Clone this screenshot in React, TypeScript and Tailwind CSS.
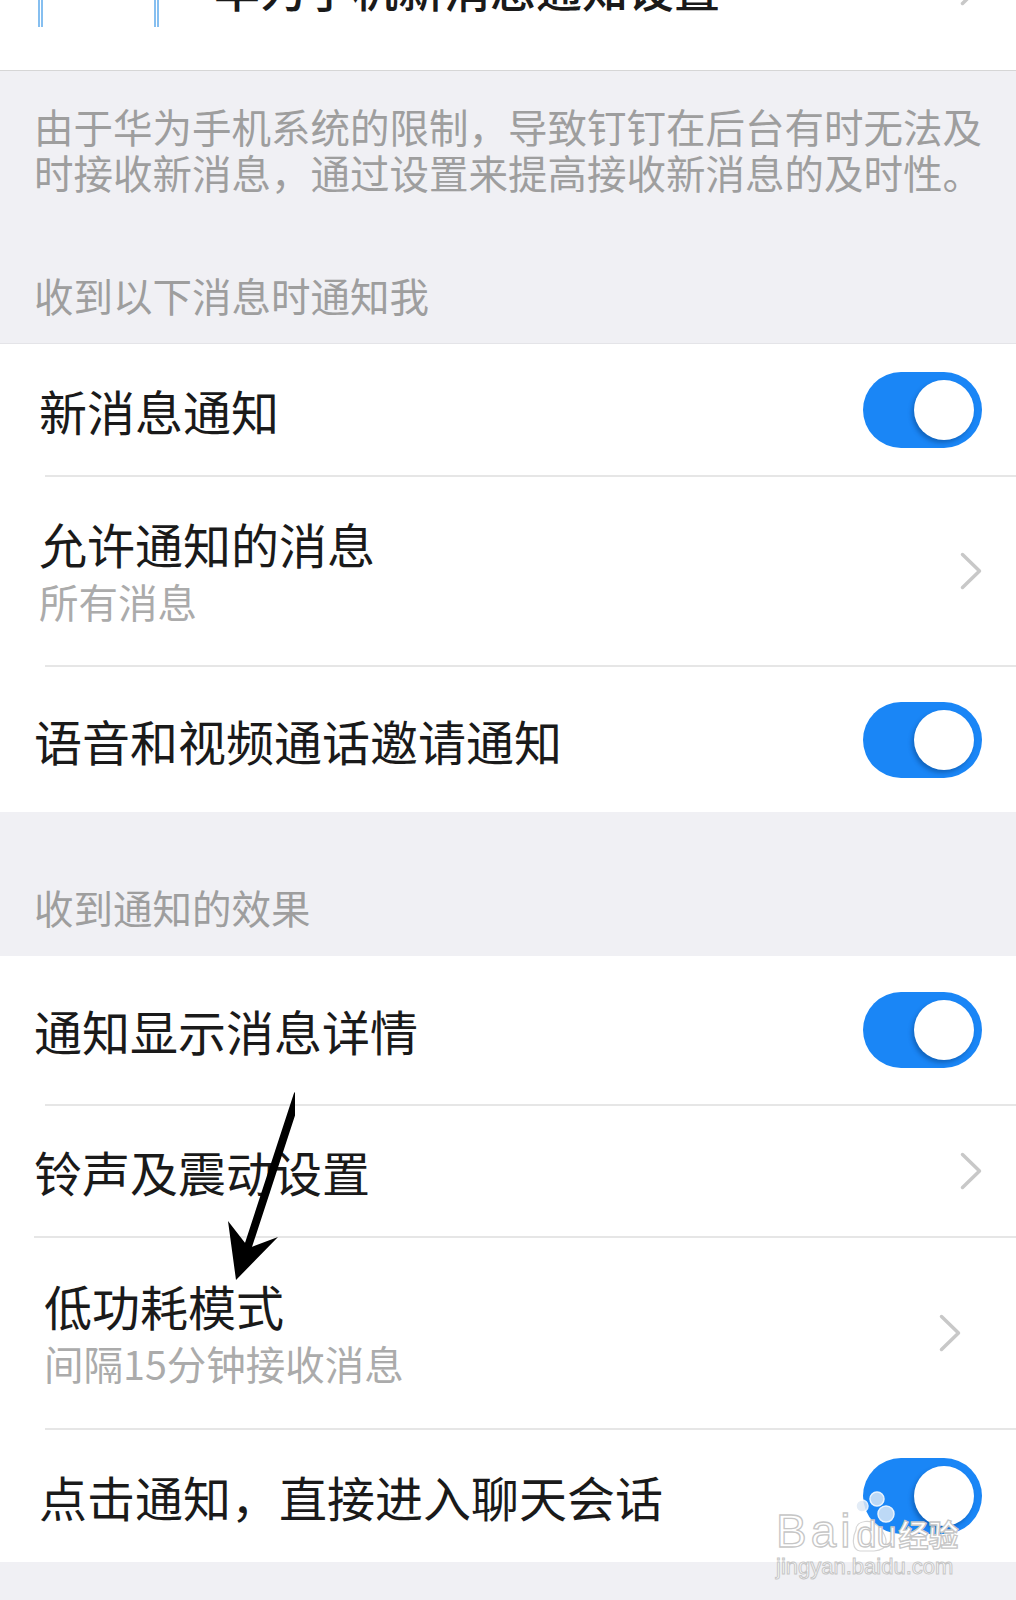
import React from "react";

function Toggle() {
  return (
    <div className="flex h-[76px] w-[119px] shrink-0 items-center justify-end rounded-full bg-[#1a86f6] pr-[8px]">
      <div className="h-[60px] w-[60px] rounded-full bg-white shadow-[-2px_3px_4px_rgba(0,40,90,0.35)]" />
    </div>
  );
}

function Chevron() {
  return (
    <svg width="22" height="38" viewBox="0 0 22 38" className="shrink-0">
      <polyline points="2.5,2.5 19.5,19 2.5,35.5" fill="none" stroke="#c8c8c8" strokeWidth="3.5" strokeLinecap="round" strokeLinejoin="round" />
    </svg>
  );
}

function Divider({ left }: { left: string }) {
  return (
    <div className={`bg-white ${left}`}>
      <div className="h-[2px] bg-[#e6e6e6]" />
    </div>
  );
}

function Title({ children }: { children: React.ReactNode }) {
  return <div className="text-[48px] leading-[48px] text-[#1a1a1a]">{children}</div>;
}

function Sub({ children }: { children: React.ReactNode }) {
  return <div className="mt-[12px] text-[39.5px] leading-[44px] text-[#ababab]">{children}</div>;
}

export default function App() {
  return (
    <div className="relative h-[1600px] w-[1016px] overflow-hidden bg-[#f0f0f4] font-['Noto_Sans_CJK_SC','Noto_Sans',sans-serif]">
      {/* top row, scrolled mostly out of view */}
      <div className="flex h-[71px] items-start overflow-hidden border-b border-[#d6d6d6] bg-white">
        <div className="ml-[38px] h-[27px] w-[121px] shrink-0 border-x-[5px] border-double border-[#86bff0]" />
        <div className="-mt-[36px] ml-[55px] text-[46px] leading-[46px] font-medium text-[#1a1a1a]">华为手机新消息通知设置</div>
        <div className="-mt-[32px] ml-auto mr-[34px]">
          <Chevron />
        </div>
      </div>

      {/* hint + section header */}
      <div className="border-b border-[#e4e4e8] pb-[29px] pl-[34px] pt-[32px] text-[39.5px] text-[#9e9e9e]">
        <div className="leading-[46px]">
          <div>由于华为手机系统的限制，导致钉钉在后台有时无法及</div>
          <div>时接收新消息，通过设置来提高接收新消息的及时性。</div>
        </div>
        <div className="mt-[80px] leading-[39px]">收到以下消息时通知我</div>
      </div>

      <div className="flex h-[131px] items-center justify-between bg-white pl-[39px] pr-[34px]">
        <Title>新消息通知</Title>
        <Toggle />
      </div>
      <Divider left="pl-[45px]" />
      <div className="flex h-[188px] items-center justify-between bg-white pl-[39px] pr-[34px]">
        <div>
          <Title>允许通知的消息</Title>
          <Sub>所有消息</Sub>
        </div>
        <Chevron />
      </div>
      <Divider left="pl-[45px]" />
      <div className="flex h-[145px] items-center justify-between bg-white pl-[34px] pr-[34px]">
        <Title>语音和视频通话邀请通知</Title>
        <Toggle />
      </div>

      <div className="flex h-[144px] items-end pb-[30px] pl-[34px] text-[39.5px] leading-[39px] text-[#9e9e9e]">
        收到通知的效果
      </div>

      <div className="flex h-[148px] items-center justify-between bg-white pl-[34px] pr-[34px]">
        <Title>通知显示消息详情</Title>
        <Toggle />
      </div>
      <Divider left="pl-[45px]" />
      <div className="flex h-[130px] items-center justify-between bg-white pl-[34px] pr-[34px]">
        <Title>铃声及震动设置</Title>
        <Chevron />
      </div>
      <Divider left="pl-[34px]" />
      <div className="flex h-[190px] items-center justify-between bg-white pl-[44px] pr-[55px]">
        <div>
          <Title>低功耗模式</Title>
          <Sub>间隔15分钟接收消息</Sub>
        </div>
        <Chevron />
      </div>
      <Divider left="pl-[45px]" />
      <div className="flex h-[132px] items-center justify-between bg-white pl-[39px] pr-[34px]">
        <Title>点击通知，直接进入聊天会话</Title>
        <Toggle />
      </div>

      {/* hand-drawn arrow annotation */}
      <svg className="pointer-events-none absolute left-[220px] top-[1090px]" width="75" height="195" viewBox="0 0 75 195">
        <line x1="78" y1="5" x2="28" y2="158" stroke="#000" strokeWidth="7" strokeLinecap="round" />
        <line x1="78" y1="5" x2="28" y2="158" stroke="#000" strokeWidth="7" strokeLinecap="round" transform="translate(-1 0)" />
        <polygon points="16,190 8,131 29,158 58,147" fill="#000" />
      </svg>

      {/* watermark */}
      <div className="pointer-events-none absolute left-[776px] top-[1486px] w-[190px]">
        <svg className="absolute left-0 top-0" width="190" height="70" viewBox="0 0 190 70">
          <circle cx="86" cy="20" r="6" fill="#dfe9f5" stroke="#ffffff" strokeWidth="1.5" opacity="0.85" />
          <circle cx="101" cy="13" r="7" fill="#cfe2f7" stroke="#ffffff" strokeWidth="1.5" opacity="0.9" />
          <circle cx="110" cy="28" r="8" fill="#cfe2f7" stroke="#ffffff" strokeWidth="1.5" opacity="0.9" />
          <path d="M80 44 C80 34 96 32 104 42 C112 52 114 64 98 65 L84 65 C76 64 76 52 80 44 Z" fill="none" stroke="#d6d6d6" strokeWidth="1.2" />
        </svg>
        <div className="relative mt-[26px] flex items-end font-['Liberation_Sans',sans-serif] text-white [-webkit-text-stroke:1.3px_#c6c6c6]">
          <span className="text-[46px] leading-[38px] tracking-[4px]">Bai</span>
          <span className="ml-[2px] text-[36px] leading-[30px]">du</span>
          <span className="ml-[2px] font-['Noto_Sans_CJK_SC',sans-serif] text-[30px] leading-[34px] font-bold">经验</span>
        </div>
        <div className="relative mt-[6px] font-['Liberation_Sans',sans-serif] text-[22px] leading-[22px] text-white [-webkit-text-stroke:1px_#c6c6c6]">
          jingyan.baidu.com
        </div>
      </div>
    </div>
  );
}
